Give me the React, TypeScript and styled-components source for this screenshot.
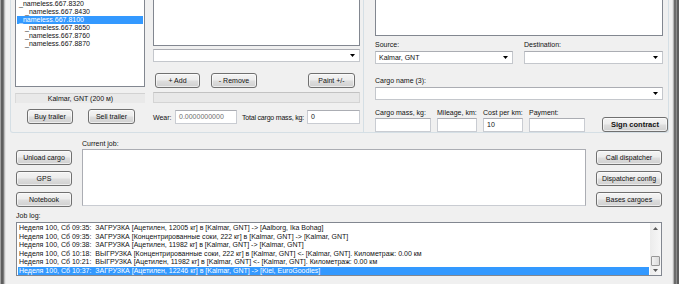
import React from 'react';
import styled, {createGlobalStyle} from 'styled-components';

interface WidthProps {
    $w?: number
}

interface ButtonProps {
    $w: number
    $bold?: boolean
}

interface ItemProps {
    $indent?: boolean
    $selected?: boolean
}

const treeItems = [
    {name: '_nameless.667.8320', indent: false},
    {name: '_nameless.667.8430', indent: true},
    {name: '_nameless.667.8100', indent: false, selected: true},
    {name: '_nameless.667.8650', indent: true},
    {name: '_nameless.667.8760', indent: true},
    {name: '_nameless.667.8870', indent: true},
]

const jobLog = [
    'Неделя 100, Сб 09:35:  ЗАГРУЗКА [Ацетилен, 12005 кг] в [Kalmar, GNT] -> [Aalborg, Ika Bohag]',
    'Неделя 100, Сб 09:35:  ЗАГРУЗКА [Концентрированные соки, 222 кг] в [Kalmar, GNT] -> [Kalmar, GNT]',
    'Неделя 100, Сб 09:38:  ЗАГРУЗКА [Ацетилен, 11982 кг] в [Kalmar, GNT] -> [Kalmar, GNT]',
    'Неделя 100, Сб 10:18:  ВЫГРУЗКА [Концентрированные соки, 222 кг] в [Kalmar, GNT] <- [Kalmar, GNT]. Километраж: 0.00 км',
    'Неделя 100, Сб 10:21:  ВЫГРУЗКА [Ацетилен, 11982 кг] в [Kalmar, GNT] <- [Kalmar, GNT]. Километраж: 0.00 км',
    'Неделя 100, Сб 10:37:  ЗАГРУЗКА [Ацетилен, 12246 кг] в [Kalmar, GNT] -> [Kiel, EuroGoodies]',
]

const ArrowDown = ({color = '#000'}: { color?: string }) => (
    <svg width="5" height="3" viewBox="0 0 5 3">
        <path d="M0 0h5L2.5 3z" fill={color}/>
    </svg>
)

const ArrowUp = ({color = '#000'}: { color?: string }) => (
    <svg width="5" height="3" viewBox="0 0 5 3">
        <path d="M0 3h5L2.5 0z" fill={color}/>
    </svg>
)

const Combo = ({value = '', width}: { value?: string, width?: number }) => (
    <ComboBox $w={width}>
        <ComboText>{value}</ComboText>
        <ArrowDown/>
    </ComboBox>
)

const App = () => {
    return (
        <>
            <GlobalStyle/>
            <Window>
                <LeftEdge/>
                <Client>
                    <TopGroup>
                        <TrailerColumn>
                            <TreeList>
                                {
                                    treeItems.map((item) => (
                                        <TreeItem key={item.name} $indent={item.indent} $selected={item.selected}>
                                            {item.name}
                                        </TreeItem>
                                    ))
                                }
                            </TreeList>
                            <StatusLabel>Kalmar, GNT (200 м)</StatusLabel>
                            <TrailerButtons>
                                <WinButton $w={46}>Buy trailer</WinButton>
                                <WinButton $w={47}>Sell trailer</WinButton>
                            </TrailerButtons>
                        </TrailerColumn>

                        <PartsColumn>
                            <ListBox $h={46}/>
                            <ComboSpacer>
                                <Combo/>
                            </ComboSpacer>
                            <PartsButtons>
                                <WinButton $w={45}>+ Add</WinButton>
                                <RemoveButton $w={46}>- Remove</RemoveButton>
                                <PaintButton $w={47}>Paint +/-</PaintButton>
                            </PartsButtons>
                            <ProgressBar/>
                            <WearRow>
                                <InlineLabel $w={22}>Wear:</InlineLabel>
                                <TextBox $w={62} $disabled>0.0000000000</TextBox>
                                <MassLabel $w={65}>Total cargo mass, kg:</MassLabel>
                                <TextBox>0</TextBox>
                            </WearRow>
                        </PartsColumn>

                        <GroupDivider/>

                        <ContractColumn>
                            <ListBox $h={36}/>
                            <RouteRow>
                                <Field $w={138}>
                                    <FieldLabel>Source:</FieldLabel>
                                    <Combo value="Kalmar, GNT"/>
                                </Field>
                                <Field>
                                    <FieldLabel>Destination:</FieldLabel>
                                    <Combo/>
                                </Field>
                            </RouteRow>
                            <CargoField>
                                <FieldLabel>Cargo name (3):</FieldLabel>
                                <Combo/>
                            </CargoField>
                            <NumbersRow>
                                <Field $w={56}>
                                    <FieldLabel>Cargo mass, kg:</FieldLabel>
                                    <NumberBox/>
                                </Field>
                                <Field $w={40}>
                                    <FieldLabel>Mileage, km:</FieldLabel>
                                    <NumberBox/>
                                </Field>
                                <Field $w={40}>
                                    <FieldLabel>Cost per km:</FieldLabel>
                                    <NumberBox>10</NumberBox>
                                </Field>
                                <Field $w={56}>
                                    <FieldLabel>Payment:</FieldLabel>
                                    <NumberBox/>
                                </Field>
                                <SignButton $w={66} $bold>Sign contract</SignButton>
                            </NumbersRow>
                        </ContractColumn>
                    </TopGroup>

                    <BottomArea>
                        <JobRow>
                            <SideButtons $w={56}>
                                <WinButton $w={56}>Unload cargo</WinButton>
                                <WinButton $w={56}>GPS</WinButton>
                                <WinButton $w={56}>Notebook</WinButton>
                            </SideButtons>
                            <CurrentJob>
                                <FieldLabel>Current job:</FieldLabel>
                                <JobText/>
                            </CurrentJob>
                            <SideButtons $w={66}>
                                <WinButton $w={66}>Call dispatcher</WinButton>
                                <WinButton $w={66}>Dispatcher config</WinButton>
                                <WinButton $w={66}>Bases cargoes</WinButton>
                            </SideButtons>
                        </JobRow>
                        <LogLabel>Job log:</LogLabel>
                        <LogBox>
                            <LogLines>
                                {
                                    jobLog.map((line, index) => (
                                        <LogLine key={index} $selected={index === jobLog.length - 1}>{line}</LogLine>
                                    ))
                                }
                            </LogLines>
                            <ScrollBar>
                                <ScrollArrow $h={11}><ArrowUp color="#5b5b5b"/></ScrollArrow>
                                <ScrollTrack/>
                                <ScrollThumb/>
                                <ScrollArrow $h={9}><ArrowDown color="#5b5b5b"/></ScrollArrow>
                            </ScrollBar>
                        </LogBox>
                    </BottomArea>
                </Client>
                <RightEdge/>
            </Window>
        </>
    );
};

export default App;

const GlobalStyle = createGlobalStyle`
html, body {
  margin: 0;
  padding: 0;
  background: #f0f0f0;
  overflow: hidden;
}
body {
  font-family: "Liberation Sans", Arial, sans-serif;
  font-size: 7px;
  color: #111;
}
* {
  box-sizing: border-box;
}
`

const Window = styled.div`
display: flex;
width: 679px;
height: 284px;
overflow: hidden;
background: #f0f0f0;
`

const LeftEdge = styled.div`
width: 6px;
flex-shrink: 0;
background: linear-gradient(to right, #a2a2a2 0 1px, #5e5e5e 1px 3px, #7a7a7a 3px 4px, #bdbdbd 4px 5px, #e4e4e4 5px 6px);
`

const RightEdge = styled.div`
width: 7px;
flex-shrink: 0;
background: linear-gradient(to right, #e4e4e4 0 1px, #b4b4b4 1px 2px, #6c6c6c 2px 4px, #8c8c8c 4px 5px, #5e5e5e 5px 7px);
`

const Client = styled.div`
flex: 1;
display: flex;
flex-direction: column;
`

const TopGroup = styled.div`
display: flex;
align-items: stretch;
height: 133px;
margin: 0 3px 0 4px;
border: 1px solid #d5dfe5;
border-top: none;
border-radius: 0 0 3px 3px;
`

const TrailerColumn = styled.div`
display: flex;
flex-direction: column;
width: 130px;
margin-left: 4px;
`

const TreeList = styled.div`
height: 87px;
padding: 0 1px;
background: #fff;
border: 1px solid #828790;
border-top: none;
`

const TreeItem = styled.div<ItemProps>`
height: 8px;
line-height: 8px;
white-space: nowrap;
padding-left: ${({$indent}: ItemProps) => $indent ? 8 : 2}px;
background: ${({$selected}: ItemProps) => $selected ? '#3399ff' : 'transparent'};
color: ${({$selected}: ItemProps) => $selected ? '#fff' : '#111'};
`

const StatusLabel = styled.div`
margin-top: 6px;
height: 10px;
line-height: 9px;
text-align: center;
background: #e9e9e9;
border-top: 1px solid #d2d2d2;
border-left: 1px solid #dadada;
`

const TrailerButtons = styled.div`
display: flex;
justify-content: space-between;
margin-top: 6px;
padding: 0 10px 0 12px;
`

const WinButton = styled.div<ButtonProps>`
width: ${({$w}: ButtonProps) => $w}px;
height: 15px;
flex-shrink: 0;
display: flex;
align-items: center;
justify-content: center;
white-space: nowrap;
border: 1px solid #707070;
border-radius: 3px;
background: linear-gradient(#f4f4f4 0%, #ececec 48%, #dedede 52%, #d0d0d0 100%);
box-shadow: inset 0 0 0 1px rgba(255, 255, 255, .6);
font-weight: ${({$bold}: ButtonProps) => $bold ? 'bold' : 'normal'};
font-size: ${({$bold}: ButtonProps) => $bold ? 7.5 : 7}px;
`

const RemoveButton = styled(WinButton)`
margin-left: 11px;
`

const PaintButton = styled(WinButton)`
margin-left: auto;
margin-right: 5px;
`

const SignButton = styled(WinButton)`
margin-left: 11px;
`

const PartsColumn = styled.div`
display: flex;
flex-direction: column;
width: 207px;
margin-left: 8px;
`

const ListBox = styled.div<{ $h: number }>`
height: ${({$h}) => $h}px;
background: #fff;
border: 1px solid #828790;
border-top: none;
`

const ComboSpacer = styled.div`
margin-top: 3px;
`

const ComboBox = styled.div<WidthProps>`
display: flex;
align-items: center;
width: ${({$w}: WidthProps) => $w ? `${$w}px` : '100%'};
height: 13px;
padding: 0 4px 0 3px;
background: #fff;
border: 1px solid #c4c7cc;
border-top-color: #abadb3;
`

const ComboText = styled.div`
flex: 1;
line-height: 11px;
white-space: nowrap;
overflow: hidden;
`

const PartsButtons = styled.div`
display: flex;
margin-top: 11px;
padding-left: 2px;
`

const ProgressBar = styled.div`
margin-top: 4px;
height: 11px;
background: #e8e8e8;
border: 1px solid #d4d4d4;
border-top-color: #c2c2c2;
`

const WearRow = styled.div`
display: flex;
align-items: center;
margin-top: 7px;
height: 14px;
`

const InlineLabel = styled.div<WidthProps>`
width: ${({$w}: WidthProps) => $w}px;
flex-shrink: 0;
white-space: nowrap;
`

const MassLabel = styled(InlineLabel)`
margin-left: 5px;
letter-spacing: -0.2px;
`

const TextBox = styled.div<WidthProps & { $disabled?: boolean }>`
width: ${({$w}) => $w ? `${$w}px` : 'auto'};
flex: ${({$w}) => $w ? '0 0 auto' : '1'};
height: 14px;
line-height: 12px;
padding-left: 3px;
background: #fff;
border: 1px solid #c9ccd2;
border-top-color: #abadb3;
color: ${({$disabled}) => $disabled ? '#6d6d6d' : '#111'};
white-space: nowrap;
`

const GroupDivider = styled.div`
width: 1px;
margin-left: 3px;
background: #d5dfe5;
`

const ContractColumn = styled.div`
display: flex;
flex-direction: column;
width: 288px;
margin-left: 11px;
`

const RouteRow = styled.div`
display: flex;
gap: 11px;
margin-top: 5px;
`

const Field = styled.div<WidthProps>`
display: flex;
flex-direction: column;
gap: 2px;
width: ${({$w}: WidthProps) => $w ? `${$w}px` : 'auto'};
flex: ${({$w}: WidthProps) => $w ? '0 0 auto' : '1'};
`

const FieldLabel = styled.div`
height: 8px;
line-height: 8px;
white-space: nowrap;
`

const CargoField = styled(Field)`
margin-top: 13px;
`

const NumbersRow = styled.div`
display: flex;
align-items: flex-end;
gap: 6px;
margin-top: 8px;
`

const NumberBox = styled.div`
height: 14px;
margin-top: -1px;
line-height: 12px;
padding-left: 3px;
background: #fff;
border: 1px solid #c9ccd2;
border-top-color: #abadb3;
`

const BottomArea = styled.div`
display: flex;
flex-direction: column;
padding-left: 10px;
`

const JobRow = styled.div`
display: flex;
align-items: flex-start;
`

const SideButtons = styled.div<WidthProps>`
display: flex;
flex-direction: column;
gap: 6px;
width: ${({$w}: WidthProps) => $w}px;
margin-top: 17px;
`

const CurrentJob = styled.div`
display: flex;
flex-direction: column;
gap: 1px;
width: 504px;
margin: 7px 10px 0;
`

const JobText = styled.div`
height: 57px;
background: #fff;
border: 1px solid #abadb3;
border-bottom-color: #c9ccd2;
`

const LogLabel = styled.div`
margin-top: 5px;
height: 8px;
line-height: 8px;
`

const LogBox = styled.div`
display: flex;
width: 646px;
height: 54px;
margin-top: 2px;
background: #fff;
border: 1px solid #828790;
`

const LogLines = styled.div`
flex: 1;
padding: 1px 1px 0;
overflow: hidden;
`

const LogLine = styled.div<ItemProps>`
height: 8.5px;
line-height: 8.5px;
padding-left: 1px;
white-space: pre;
overflow: hidden;
background: ${({$selected}: ItemProps) => $selected ? '#3399ff' : 'transparent'};
color: ${({$selected}: ItemProps) => $selected ? '#fff' : '#111'};
`

const ScrollBar = styled.div`
display: flex;
flex-direction: column;
width: 11px;
background: linear-gradient(to right, #ececec, #f7f7f7);
`

const ScrollArrow = styled.div<{ $h: number }>`
display: flex;
align-items: center;
justify-content: center;
height: ${({$h}) => $h}px;
`

const ScrollTrack = styled.div`
flex: 1;
`

const ScrollThumb = styled.div`
height: 10px;
margin: 0 1px;
border: 1px solid #979797;
border-radius: 1px;
background: linear-gradient(to right, #f2f2f2, #dcdcdc);
`
